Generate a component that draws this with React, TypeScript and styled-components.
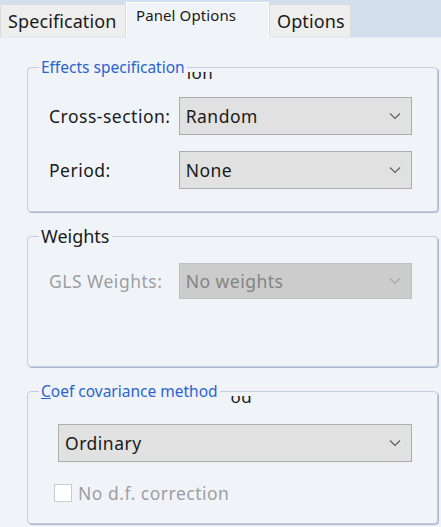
import React from "react";
import styled, { createGlobalStyle } from "styled-components";

const Global = createGlobalStyle`
  html, body { margin: 0; padding: 0; }
  body {
    background: #f0f4f9;
    font-family: "Noto Sans", "Open Sans", sans-serif;
    color: #1a1a1a;
    width: 441px;
    height: 527px;
    overflow: hidden;
  }
`;

const Page = styled.div`
  width: 441px;
  height: 527px;
  background: #f0f4f9;
`;

const TabBar = styled.div`
  height: 38px;
  background: #d3deec;
  display: flex;
  align-items: flex-end;
  border-bottom: 1px solid #e3e8ef;
  box-sizing: border-box;
`;

const Tab = styled.div<{ $active?: boolean; $w: number }>`
  width: ${(p) => p.$w}px;
  box-sizing: border-box;
  height: ${(p) => (p.$active ? 36 : 33)}px;
  margin-bottom: ${(p) => (p.$active ? -1 : 0)}px;
  background: ${(p) => (p.$active ? "#f0f4f9" : "#eeeeee")};
  border: 1px solid ${(p) => (p.$active ? "#ffffff" : "#dcdcdc")};
  border-bottom: none;
  display: flex;
  align-items: ${(p) => (p.$active ? "flex-start" : "center")};
  padding-left: ${(p) => (p.$active ? 9 : 7)}px;
  padding-top: ${(p) => (p.$active ? 2 : 0)}px;
  font-size: ${(p) => (p.$active ? 15 : 18)}px;
  letter-spacing: 0.1px;
  color: #1a1a1a;
  white-space: nowrap;
`;

const Content = styled.div`
  padding: 29px 3px 0 27px;
  display: flex;
  flex-direction: column;
  gap: 24px;
`;

const Group = styled.div<{ $h: number; $pt: number }>`
  position: relative;
  width: 411px;
  height: ${(p) => p.$h}px;
  box-sizing: border-box;
  border: 1px solid #c3cddd;
  box-shadow: 1px 1px 0 #aab6cc;
  border-radius: 4px;
  padding: ${(p) => p.$pt}px 25px 0 20px;
  display: flex;
  flex-direction: column;
`;

const Legend = styled.div<{ $blue?: boolean }>`
  position: absolute;
  top: -11px;
  left: 11px;
  display: flex;
  align-items: flex-start;
  font-size: ${(p) => (p.$blue ? 15.5 : 18)}px;
  letter-spacing: 0;
  color: ${(p) => (p.$blue ? "#2b63cf" : "#1a1a1a")};
  white-space: nowrap;
`;

const LegendText = styled.span`
  background: #f0f4f9;
  padding: 0 2px;
  line-height: 20px;
`;

const Ghost = styled.span<{ $ml: number }>`
  display: flex;
  align-items: flex-end;
  height: 9px;
  overflow: hidden;
  margin-top: 15px;
  margin-left: ${(p) => p.$ml}px;
`;

const GhostText = styled.span`
  font-size: 17px;
  line-height: 1;
  letter-spacing: 0.5px;
  color: #1a1a1a;
`;

const Row = styled.div<{ $mb?: number }>`
  display: flex;
  align-items: center;
  margin-bottom: ${(p) => p.$mb ?? 0}px;
`;

const Label = styled.div<{ $disabled?: boolean }>`
  width: 130px;
  font-size: 17.5px;
  letter-spacing: 0.5px;
  color: ${(p) => (p.$disabled ? "#9e9e9e" : "#1a1a1a")};
  padding-left: 1px;
  white-space: nowrap;
`;

const Select = styled.div<{ $disabled?: boolean; $h: number; $w: number; $ml?: number }>`
  width: ${(p) => p.$w}px;
  height: ${(p) => p.$h}px;
  margin-left: ${(p) => p.$ml ?? 0}px;
  box-sizing: border-box;
  background: ${(p) => (p.$disabled ? "#cccccc" : "#e1e1e1")};
  border: 1px solid ${(p) => (p.$disabled ? "#bfbfbf" : "#adadad")};
  display: flex;
  align-items: center;
  justify-content: space-between;
  padding: 0 10px 0 6px;
  font-size: 17.5px;
  letter-spacing: 0.5px;
  color: ${(p) => (p.$disabled ? "#838383" : "#1a1a1a")};
`;

const Chevron = ({ color }: { color: string }) => (
  <svg width="12" height="8" viewBox="0 0 12 8">
    <polyline points="1,1.5 6,6.5 11,1.5" fill="none" stroke={color} strokeWidth="1.2" />
  </svg>
);

const CheckRow = styled.div`
  display: flex;
  align-items: center;
  gap: 6px;
  margin-top: 19px;
  margin-left: 6px;
`;

const Box = styled.div`
  width: 18px;
  height: 18px;
  box-sizing: border-box;
  background: #ffffff;
  border: 1px solid #cccccc;
`;

const CheckLabel = styled.span`
  font-size: 17.5px;
  letter-spacing: 0.5px;
  color: #9e9e9e;
`;

const U = styled.span`
  text-decoration: underline;
`;

export default function App() {
  return (
    <Page>
      <Global />
      <TabBar>
        <Tab $w={126}>Specification</Tab>
        <Tab $w={143} $active>Panel Options</Tab>
        <Tab $w={82}>Options</Tab>
      </TabBar>
      <Content>
        <Group $h={145} $pt={29}>
          <Legend $blue>
            <LegendText>Effects specification</LegendText>
            <Ghost $ml={0}>
              <GhostText>ion</GhostText>
            </Ghost>
          </Legend>
          <Row $mb={16}>
            <Label>Cross-section:</Label>
            <Select $h={38} $w={234}>
              Random
              <Chevron color="#606060" />
            </Select>
          </Row>
          <Row>
            <Label>Period:</Label>
            <Select $h={38} $w={234}>
              None
              <Chevron color="#606060" />
            </Select>
          </Row>
        </Group>
        <Group $h={131} $pt={26}>
          <Legend>
            <LegendText>Weights</LegendText>
          </Legend>
          <Row>
            <Label $disabled>GLS Weights:</Label>
            <Select $h={36} $w={234} $disabled>
              No weights
              <Chevron color="#a8a8a8" />
            </Select>
          </Row>
        </Group>
        <Group $h={133} $pt={32}>
          <Legend $blue>
            <LegendText>
              <U>C</U>oef covariance method
            </LegendText>
            <Ghost $ml={11}>
              <GhostText>od</GhostText>
            </Ghost>
          </Legend>
          <Row>
            <Select $h={38} $w={354} $ml={10}>
              Ordinary
              <Chevron color="#606060" />
            </Select>
          </Row>
          <CheckRow>
            <Box />
            <CheckLabel>No d.f. correction</CheckLabel>
          </CheckRow>
        </Group>
      </Content>
    </Page>
  );
}
